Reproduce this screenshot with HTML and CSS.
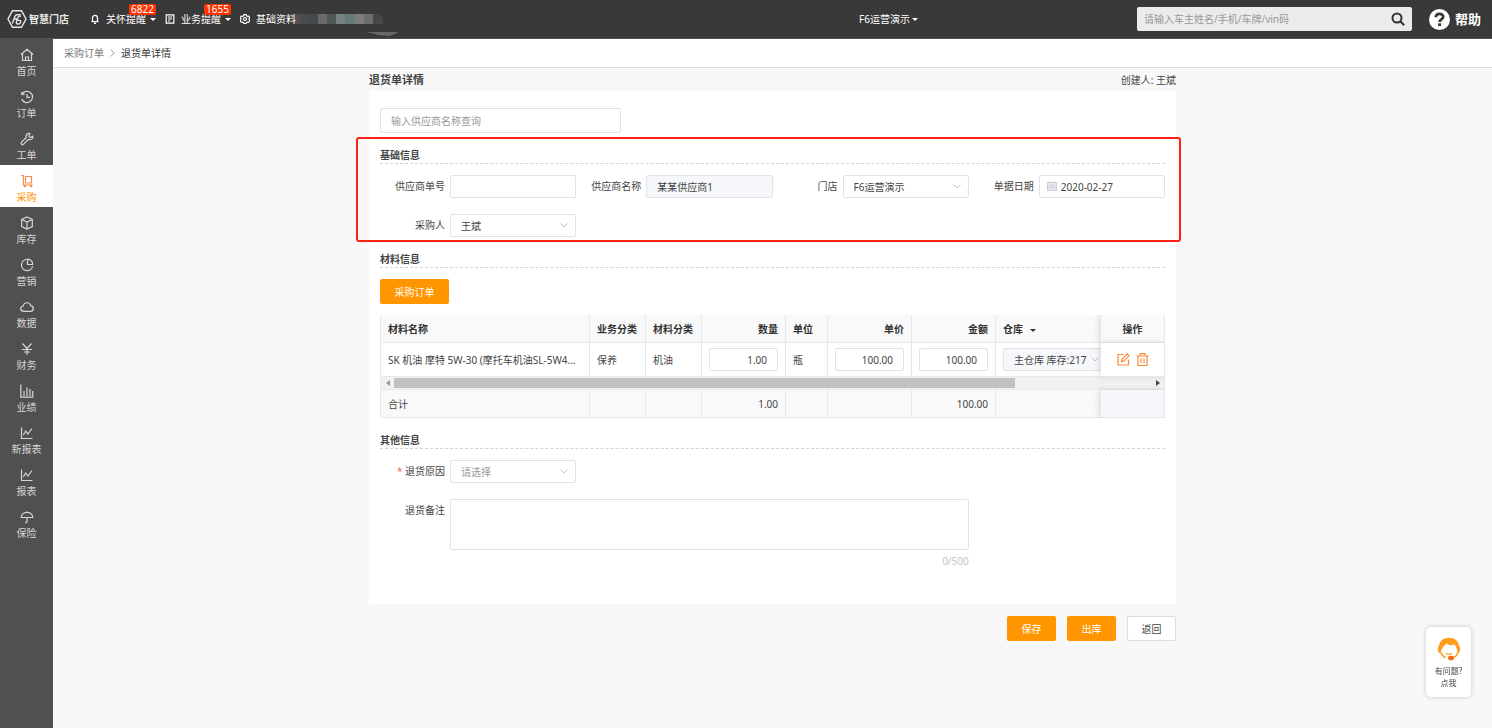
FILE: index.html
```html
<!DOCTYPE html>
<html lang="zh-CN">
<head>
<meta charset="utf-8">
<meta name="viewport" content="width=device-width, initial-scale=1">
<title>退货单详情</title>
<link rel="stylesheet" href="styles.css">
</head>
<body>
<header class="topbar">
  <a class="logo" href="#">
    <svg width="20" height="20" viewBox="0 0 20 20" fill="none" stroke="currentColor" stroke-width="1.4"><path d="M5.5 1.7h9L19 10l-4.500 8.300h-9L1 10z"/><path d="M5.300 14.500 8 7.300q.6-1.600 2.200-1.600h3.600M6.700 10h3.100M13.800 7.400h-1.300q-1.300 0-1.800 1.500l-1.300 3.900q-.6 2.200 1.500 2.200h.7q1.500 0 2-1.600.6-2-1.200-2h-1.900"/></svg>
    <span class="logo-text">智慧门店</span>
  </a>
  <nav class="topnav">
    <a class="topnav-item" href="#">
      <svg class="ico10" viewBox="0 0 10 10" fill="none" stroke="currentColor" stroke-width="1.300"><path d="M2.500 7.500V4a2.500 2.700 0 0 1 5 0v3.500M1.500 7.600h7M4 9.300h2"/></svg>
      <span>关怀提醒</span><i class="caret"></i><b class="badge">6822</b>
    </a>
    <a class="topnav-item" href="#">
      <svg class="ico10" viewBox="0 0 10 10" fill="none" stroke="currentColor" stroke-width="1.200"><path d="M1.200.8h7.600v8.400H1.200zM3 3h4M3 5h4M3 7h2"/></svg>
      <span>业务提醒</span><i class="caret"></i><b class="badge">1655</b>
    </a>
    <a class="topnav-item" href="#">
      <svg class="ico10" viewBox="0 0 10 10" fill="none" stroke="currentColor" stroke-width="1.200"><path d="M3.500 1.700 4 .7h2l.5 1 1.200.6 1.100-.1.900 1.700-.6.900v.8l.6 1-.9 1.600-1.100-.1-1.200.6-.5.700H4l-.5-.7-1.200-.6-1.100.1-.9-1.600.6-1v-.8l-.6-.9.900-1.700 1.100.1z"/><circle cx="5" cy="5" r="1.500"/></svg>
      <span>基础资料</span>
    </a>
  </nav>
  <svg class="mosaic" width="108" height="28" viewBox="0 0 108 28"><path fill="#554e51" d="M0 4h8v10H0z"/><path fill="#4b4a4d" d="M8 4h9v10H8z"/><path fill="#43484c" d="M17 4h9v10h-9z"/><path fill="#696b68" d="M26 4h9v10h-9z"/><path fill="#505757" d="M35 4h9v10h-9z"/><path fill="#75827f" d="M44 4h9v10h-9z"/><path fill="#667a79" d="M53 4h10v10H53z"/><path fill="#7b7d7a" d="M63 4h9v10h-9z"/><path fill="#6b6f6c" d="M72 4h9v10h-9z"/><path fill="#474747" d="M81 4h4l6 4v6H81z"/><path fill="#686868" d="M74 22h32q-5 4-11 4-10-1-21-4z"/></svg>
  <a class="shop" href="#">F6运营演示<i class="caret"></i></a>
  <div class="topbar-right">
    <form class="search">
      <input type="text" aria-label="搜索" placeholder="请输入车主姓名/手机/车牌/vin码">
      <button type="button" aria-label="查询"><svg width="14" height="14" viewBox="0 0 14 14" fill="none" stroke="currentColor" stroke-width="2"><circle cx="6" cy="6" r="4.500"/><path d="m9.300 9.300 3.900 3.900"/></svg></button>
    </form>
    <a class="help" href="#"><svg width="21" height="21" viewBox="0 0 21 21"><circle cx="10.500" cy="10.500" r="10.500" fill="#fff"/><path fill="none" stroke="#393939" stroke-width="2.800" d="M6.800 8.200c.1-4.500 7.400-4.400 7.400-.4 0 2.600-3.600 2.500-3.600 5.200"/><path fill="#393939" d="M9.100 14.300h3v2.800h-3z"/></svg>帮助</a>
  </div>
</header>

<div class="body">
  <nav class="sidebar">
    <a href="#"><svg class="side-ico" viewBox="0 0 14 14"><path d="M1 6.500 7 1.200l6 5.300M2.500 5.500v7h9v-7M5.500 12.500V9h3v3.500"/></svg>首页</a>
    <a href="#"><svg class="side-ico" viewBox="0 0 14 14"><path d="M2 4.300A5.600 5.600 0 1 1 1.700 9M1.600 1.800 2 4.500l2.700-.4M7 4v3.400h3"/></svg>订单</a>
    <a href="#"><svg class="side-ico" viewBox="0 0 14 14"><path d="M12.600 4.200 10.400 5.600 8.700 4l1.200-2.400C7.300.8 5.500 2.900 6.200 5.500L1.400 10.300q-.7 1 .2 2t2-.1l4.900-4.800c3 .6 4.900-1 4.100-3.200z"/></svg>工单</a>
    <a class="active" href="#" aria-current="page"><svg class="side-ico" viewBox="0 0 14 14"><path d="M1 1.500h2.300V11h9.200M5.500 2.500h6V9h-6z"/><circle cx="4.800" cy="12" r=".7"/><circle cx="11" cy="12" r=".7"/></svg>采购</a>
    <a href="#"><svg class="side-ico" viewBox="0 0 14 14"><path d="m7 1 5.300 2.500v7L7 13l-5.300-2.500v-7zM1.700 3.500 7 6l5.300-2.500M7 6v7"/></svg>库存</a>
    <a href="#"><svg class="side-ico" viewBox="0 0 14 14"><path d="M6.500 1.400A5.600 5.600 0 1 0 12.600 8M7.500 1.200v5.300h5.200C12.500 3.500 10.500 1.400 7.500 1.200z"/></svg>营销</a>
    <a href="#"><svg class="side-ico" viewBox="0 0 14 14"><path d="M4 11.300C-.2 11.300-.2 6 3.300 6c.5-4.300 6.600-4.300 7.300-.3 3.600.4 3.500 5.600-.3 5.600z"/></svg>数据</a>
    <a href="#"><svg class="side-ico" viewBox="0 0 14 14"><path d="m2.500 1.500 4.500 5 4.500-5M7 6.500v6.300M2 7.500h10M4 10h6"/></svg>财务</a>
    <a href="#"><svg class="side-ico" viewBox="0 0 14 14"><path d="M.8.500v12.700h13M4 12V7M7 12V3.500M10 12V5M12.700 12V7"/></svg>业绩</a>
    <a href="#"><svg class="side-ico" viewBox="0 0 14 14"><path d="M1.500 1.500v11h11M3.300 9l2.400-4 2.100 3L12 2.500"/></svg>新报表</a>
    <a href="#"><svg class="side-ico" viewBox="0 0 14 14"><path d="M1.500 1.500v11h11M3.300 9l2.400-4 2.100 3L12 2.500"/></svg>报表</a>
    <a href="#"><svg class="side-ico" viewBox="0 0 14 14"><path d="M1.200 7.500C1.600.7 12.400.7 12.800 7.500H1.200zM7 1.200v1.500M7 7.500v4q-.1 1.400-2 1.200"/></svg>保险</a>
  </nav>

  <main class="main">
    <nav class="crumbs"><a href="#">采购订单</a><svg width="5" height="8" viewBox="0 0 5 8" fill="none" stroke="#999"><path d="m.7.500 3.500 3.500L.7 7.500"/></svg><span>退货单详情</span></nav>

    <div class="page">
      <div class="page-head"><h1>退货单详情</h1><span>创建人: 王斌</span></div>

      <div class="card">
        <input class="control supplier-search" type="text" aria-label="供应商" placeholder="输入供应商名称查询">

        <section class="section">
          <h2>基础信息</h2>
          <div class="grid">
            <div class="field"><label for="no">供应商单号</label><input class="control" id="no" type="text"></div>
            <div class="field"><label for="name">供应商名称</label><input class="control" id="name" type="text" value="某某供应商1" disabled></div>
            <div class="field"><label for="shop">门店</label><div class="select"><select class="control" id="shop"><option>F6运营演示</option></select><svg viewBox="0 0 8 5"><path d="m.5.500 3.500 3.500L7.500.5"/></svg></div></div>
            <div class="field"><label for="date">单据日期</label><div class="date"><svg viewBox="0 0 10 10"><path fill="#e4e6eb" d="M0 1h10v9H0z"/><path stroke="#cdd0d6" fill="none" d="M.5 1.500h9v8h-9zM2.500 0v2M7.500 0v2M2 4.500h6M2 6.500h6"/></svg><input class="control" id="date" type="text" value="2020-02-27"></div></div>
            <div class="field"><label for="buyer">采购人</label><div class="select"><select class="control" id="buyer"><option>王斌</option></select><svg viewBox="0 0 8 5"><path d="m.5.500 3.500 3.500L7.500.5"/></svg></div></div>
          </div>
          <div class="highlight"></div>
        </section>

        <section class="section">
          <h2>材料信息</h2>
          <button class="btn primary order-btn" type="button">采购订单</button>
          <div class="table-wrap">
            <table>
              <colgroup><col><col class="w56"><col class="w56"><col class="w84"><col class="w42"><col class="w84"><col class="w84"><col class="w105"><col class="w64"></colgroup>
              <thead><tr><th>材料名称</th><th>业务分类</th><th>材料分类</th><th class="num">数量</th><th>单位</th><th class="num">单价</th><th class="num">金额</th><th class="stock">仓库<i class="caret"></i></th><th class="op">操作</th></tr></thead>
              <tbody>
                <tr class="item"><td>SK 机油 摩特 5W-30 (摩托车机油SL-5W4...</td><td>保养</td><td>机油</td>
                  <td><input class="control num" type="text" aria-label="数量" value="1.00"></td><td>瓶</td>
                  <td><input class="control num" type="text" aria-label="单价" value="100.00"></td>
                  <td><input class="control num" type="text" aria-label="金额" value="100.00"></td>
                  <td class="stock"><div class="select"><select class="control" aria-label="仓库" disabled><option>主仓库 库存:217</option></select><svg viewBox="0 0 8 5"><path d="m.5.500 3.500 3.500L7.500.5"/></svg></div></td>
                  <td class="op"><div class="actions">
                    <button type="button" aria-label="编辑"><svg width="13" height="13" viewBox="0 0 13 13"><path d="M7 1.500H1v10.500h10.500V6.500M4.500 8.700l.4-2.300L10.300 1l1.800 1.800-5.400 5.400z"/></svg></button>
                    <button type="button" aria-label="删除"><svg width="13" height="13" viewBox="0 0 13 13"><path d="M.5 3h12M4 3V.7h5V3M2 3v9.500h9V3M5 5.500v4.500M8 5.500v4.500"/></svg></button>
                  </div></td></tr>
                <tr class="scroll"><td colspan="9"><div class="scrollbar"><i class="arrow left"></i><div class="track"><div class="thumb"></div></div><i class="arrow right"></i></div></td></tr>
              </tbody>
              <tfoot><tr><td>合计</td><td></td><td></td><td class="num">1.00</td><td></td><td></td><td class="num">100.00</td><td class="stock"></td><td class="op"></td></tr></tfoot>
            </table>
          </div>
        </section>

        <section class="section">
          <h2>其他信息</h2>
          <div class="grid">
            <div class="field"><label class="required" for="reason">退货原因</label><div class="select"><select class="control empty" id="reason"><option>请选择</option></select><svg viewBox="0 0 8 5"><path d="m.5.500 3.500 3.500L7.500.5"/></svg></div></div>
            <div class="field wide"><label for="note">退货备注</label><div class="note"><textarea class="control" id="note"></textarea><span>0/500</span></div></div>
          </div>
        </section>
      </div>

      <div class="footer"><button class="btn primary" type="button">保存</button><button class="btn primary" type="button">出库</button><button class="btn plain" type="button">返回</button></div>
    </div>
  </main>
</div>

<a class="support" href="#">
  <svg width="24" height="24" viewBox="0 0 24 24"><path fill="#ff9d1c" d="M3.500 16.500C.5 16 0 11 2 8.500 3 3.500 7 .8 12 .8s9 2.700 10 7.700c1.800 2.500 1.500 7-1.500 8C20.500 12 19 9.500 17.500 7.500c-3 1.500-6.500.8-8-1.200C8 8.500 4.500 10 3.500 16.500z"/><path fill="none" stroke="#ff9d1c" stroke-width="1.500" d="M21 15.500q-1.500 4.500-6 5.200M4 15.500q1.300 4 4.500 5.200"/><path fill="none" stroke="#ff9d1c" stroke-width="1.300" d="M9 16.300q3 2.200 6 0"/><ellipse cx="14" cy="21" rx="3" ry="2.300" fill="#f96c14"/></svg>
  <span>有问题?<br>点我</span>
</a>
</body>
</html>
```
FILE: styles.css
```css
* { box-sizing: border-box; }
body {
  margin: 0;
  min-height: 100vh;
  display: flex;
  flex-direction: column;
  background: #f8f8f8;
  color: #444;
  font: 10px/14px "Noto Sans", "Noto Sans CJK SC", sans-serif;
}
a { color: inherit; text-decoration: none; }
input, select, textarea, button { font: inherit; color: inherit; margin: 0; }
button { cursor: pointer; padding: 0; border: 0; background: none; }

.topbar {
  display: flex;
  align-items: center;
  height: 39px;
  padding: 0 11px 0 7px;
  background: #393939;
  border-bottom: 1px solid #505050;
  color: #fff;
}
.logo { display: flex; align-items: center; gap: 2px; color: #e8e8e8; }
.logo-text { font-weight: 700; }
.topnav { display: flex; gap: 9px; margin-left: 21px; white-space: nowrap; }
.topnav-item { position: relative; display: flex; align-items: center; gap: 6px; }
.ico10 { width: 10px; height: 10px; }
.topnav-item .caret { margin-left: -2px; }
.caret { display: inline-block; border: 3px solid transparent; border-top-color: currentColor; border-bottom: 0; }
.badge {
  position: absolute;
  top: -8px;
  right: 0;
  padding: 0 2px;
  border-radius: 2px;
  background: #ff3300;
  font-weight: 400;
  line-height: 11px;
}
.mosaic { align-self: flex-end; margin-left: -4px; flex: none; }
.shop { margin-left: auto; display: flex; align-items: center; gap: 2px; white-space: nowrap; }
.topbar-right { display: flex; align-items: center; gap: 17px; margin-left: 219px; }
.search {
  display: flex;
  align-items: center;
  width: 275px;
  height: 24px;
  padding: 0 7px;
  border-radius: 2px;
  background: #ebebeb;
  color: #333;
}
.search input { flex: 1; min-width: 0; padding: 0; border: 0; outline: 0; background: none; }
.search input::placeholder { color: #999; }
.search button { display: flex; }
.help { display: flex; align-items: center; gap: 5px; font-size: 13px; font-weight: 700; white-space: nowrap; }

.body { flex: 1; display: flex; }
.sidebar { width: 53px; flex: none; background: #505050; color: #d6d6d6; }
.sidebar a {
  display: flex;
  flex-direction: column;
  align-items: center;
  gap: 2px;
  height: 42px;
  padding-top: 9px;
}
.sidebar .active { background: #fff; color: #ff9500; }
.side-ico { width: 14px; height: 14px; fill: none; stroke: currentColor; stroke-width: 1.2; }
.active .side-ico { stroke: #f58a52; }

.main { flex: 1; min-width: 0; }
.crumbs {
  display: flex;
  align-items: center;
  gap: 6px;
  height: 29px;
  padding: 0 11px;
  background: #fff;
  border-bottom: 1px solid #dcdcdc;
  color: #333;
}
.crumbs a { color: #777; }
.page { max-width: 807px; margin: 0 auto; }
.page-head { display: flex; align-items: center; justify-content: space-between; height: 23px; }
.page-head h1 { margin: 0; font-size: 11px; font-weight: 700; line-height: 14px; }
.card { padding: 17px 11px 36px; background: #fff; }

.control {
  display: block;
  width: 100%;
  height: 23px;
  padding: 0 10px;
  border: 1px solid #e0e2e9;
  border-radius: 2px;
  outline: 0;
  background: #fff;
  appearance: none;
}
.control:disabled { background: #f5f7fa; color: #444; opacity: 1; }
.control::placeholder, .control.empty { color: #999; }
.control.num { text-align: right; }
.supplier-search { width: 241px; height: 25px; }

.section { margin-top: 15px; position: relative; }
.section h2 {
  margin: 0 0 11px;
  padding-bottom: 1px;
  border-bottom: 1px dashed #d4d4d4;
  font-size: 10px;
  line-height: 14px;
}
.grid { display: grid; grid-template-columns: repeat(4, 1fr); row-gap: 16px; }
.field { display: flex; gap: 5px; }
.field label { width: 65px; flex: none; text-align: right; line-height: 23px; white-space: nowrap; }
.field > .control, .field > div { flex: 1; min-width: 0; }
.required::before { content: "* "; color: #f56c6c; }
.wide { grid-column: 1 / span 3; }
.select, .date { position: relative; }
.select svg {
  position: absolute;
  right: 8px;
  top: 9px;
  width: 8px;
  height: 5px;
  fill: none;
  stroke: #c0c4cc;
  pointer-events: none;
}
.date svg { position: absolute; left: 8px; top: 6px; width: 10px; height: 10px; }
.date .control { padding-left: 21px; }
.note .control { height: 51px; resize: none; }
.note span { display: block; margin-top: 4px; text-align: right; color: #c0c4cc; }
.highlight {
  position: absolute;
  inset: -11px -16px -5px -24px;
  border: 2px solid #ff2015;
  border-radius: 3px;
  pointer-events: none;
}

.btn { height: 25px; border-radius: 2px; }
.primary { background: #ff9500; color: #fff; }
.plain { background: #fff; border: 1px solid #dcdcdc; }
.order-btn { display: block; width: 69px; }

.table-wrap { margin-top: 11px; overflow: hidden; }
table { width: 100%; table-layout: fixed; border-collapse: separate; border-spacing: 0; }
.w42 { width: 42px; }
.w56 { width: 56px; }
.w64 { width: 64px; }
.w84 { width: 84px; }
.w105 { width: 105px; }
th, td {
  height: 28px;
  padding: 0 7px;
  overflow: hidden;
  border-right: 1px solid #e6e8ee;
  border-bottom: 1px solid #e6e8ee;
  text-align: left;
  white-space: nowrap;
}
th:first-child, td:first-child { border-left: 1px solid #e6e8ee; }
th, tfoot td { background: #f9f9f9; }
th { color: #333; }
.item td { height: 34px; }
th.num, td.num { text-align: right; }
.stock { padding-right: 0; border-right: 0; }
th .caret { margin-left: 7px; vertical-align: 1px; }
.stock .select { width: 104px; }
th.op, td.op {
  position: relative;
  overflow: visible;
  background: #fff;
  box-shadow: -2px 0 6px rgba(0, 0, 0, .12);
  text-align: center;
}
th.op { background: #f9f9f9; }
tfoot td.op { background: #f5f7fa; }
.actions { display: flex; justify-content: center; gap: 6px; }
.actions button { display: flex; }
.actions svg { fill: none; stroke: #f98a3c; stroke-width: 1.2; }
.scroll td { height: 13px; padding: 0; }
.scrollbar { display: flex; align-items: center; height: 12px; background: #f1f1f1; }
.track { flex: 1; }
.thumb { width: 82%; height: 10px; background: #c1c1c1; }
.arrow { width: 13px; display: flex; justify-content: center; }
.arrow::before { content: ""; border: 3px solid transparent; }
.arrow.left::before { border-right: 4px solid #999; border-left: 0; }
.arrow.right::before { border-left: 4px solid #444; border-right: 0; }

.footer { display: flex; justify-content: flex-end; gap: 11px; padding-top: 12px; }
.footer .btn { width: 49px; }
.support {
  position: fixed;
  right: 21px;
  bottom: 31px;
  width: 45px;
  padding: 10px 0 8px;
  border-radius: 5px;
  background: #fff;
  box-shadow: 0 0 5px rgba(0, 0, 0, .2);
  text-align: center;
  font-size: 8px;
  line-height: 12px;
}
.support svg { display: block; margin: 0 auto 4px; }
.support span { display: block; }
```
